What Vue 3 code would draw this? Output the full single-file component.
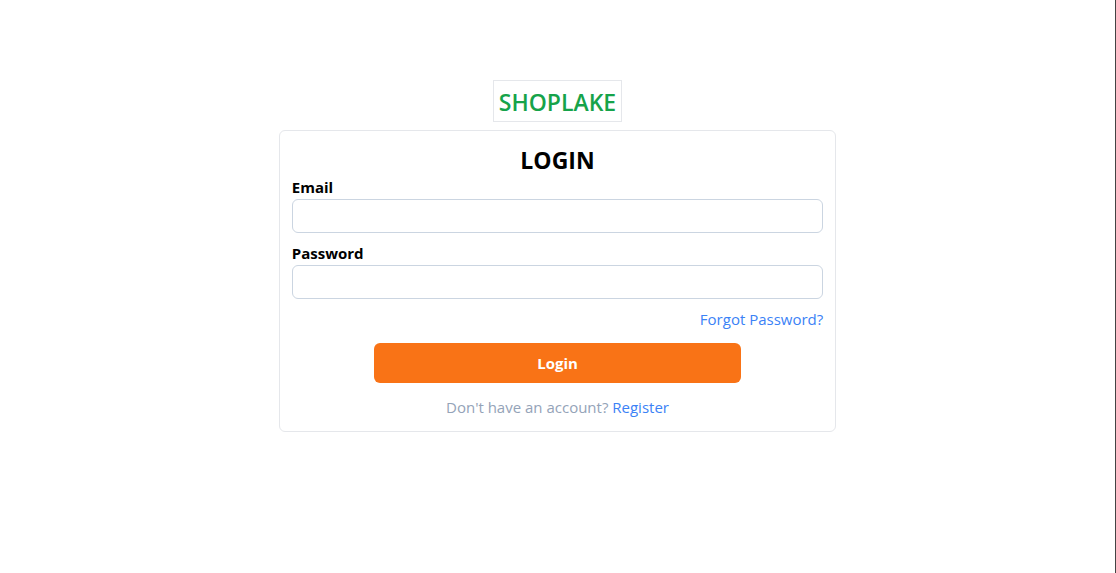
<script setup>
import { ref } from 'vue'

const email = ref('')
const password = ref('')
</script>

<template>
  <main class="page">
    <div class="brand">SHOPLAKE</div>
    <form class="card" @submit.prevent>
      <h1 class="title">LOGIN</h1>
      <div class="field">
        <label for="email">Email</label>
        <input id="email" v-model="email" type="email" />
      </div>
      <div class="field">
        <label for="password">Password</label>
        <input id="password" v-model="password" type="password" />
      </div>
      <a class="link forgot" href="#">Forgot Password?</a>
      <button class="submit" type="submit">Login</button>
      <p class="signup">Don't have an account? <a class="link" href="#">Register</a></p>
    </form>
  </main>
</template>

<style>
body {
  background: #fff;
}
</style>

<style scoped>
.page,
.page * {
  box-sizing: border-box;
}
.page {
  min-height: 100vh;
  padding: 80px 0;
  display: flex;
  flex-direction: column;
  align-items: center;
  gap: 8px;
  border-right: 1px solid #444;
  font-family: "Segoe UI", "Open Sans", "Noto Sans", sans-serif;
  font-size: 15px;
  line-height: 24px;
  color: #000;
}
.brand {
  padding: 5px 5px 3px;
  border: 1px solid #e5e7eb;
  font-size: 23px;
  line-height: 32px;
  font-weight: 600;
  color: #16a34a;
}
.card {
  width: 50%;
  padding: 12px;
  display: flex;
  flex-direction: column;
  border: 1px solid #e5e7eb;
  border-radius: 6px;
}
.title {
  margin: 0;
  padding-top: 2px;
  font-size: 23px;
  line-height: 30px;
  font-weight: 700;
  text-align: center;
}
.field {
  display: flex;
  flex-direction: column;
  margin-bottom: 8px;
}
.field label {
  font-weight: 700;
}
.field input {
  width: 100%;
  height: 34px;
  padding: 4px 8px;
  border: 1px solid #cbd5e1;
  border-radius: 6px;
  background: #fff;
  font: inherit;
  outline: none;
}
.link {
  color: #3b82f6;
  text-decoration: none;
}
.forgot {
  align-self: flex-end;
}
.submit {
  width: 69%;
  height: 40px;
  margin: 12px 0;
  align-self: center;
  border: 0;
  border-radius: 6px;
  background: #f97316;
  color: #fff;
  font: inherit;
  font-weight: 700;
  cursor: pointer;
}
.signup {
  margin: 0;
  text-align: center;
  color: #94a3b8;
}
</style>
